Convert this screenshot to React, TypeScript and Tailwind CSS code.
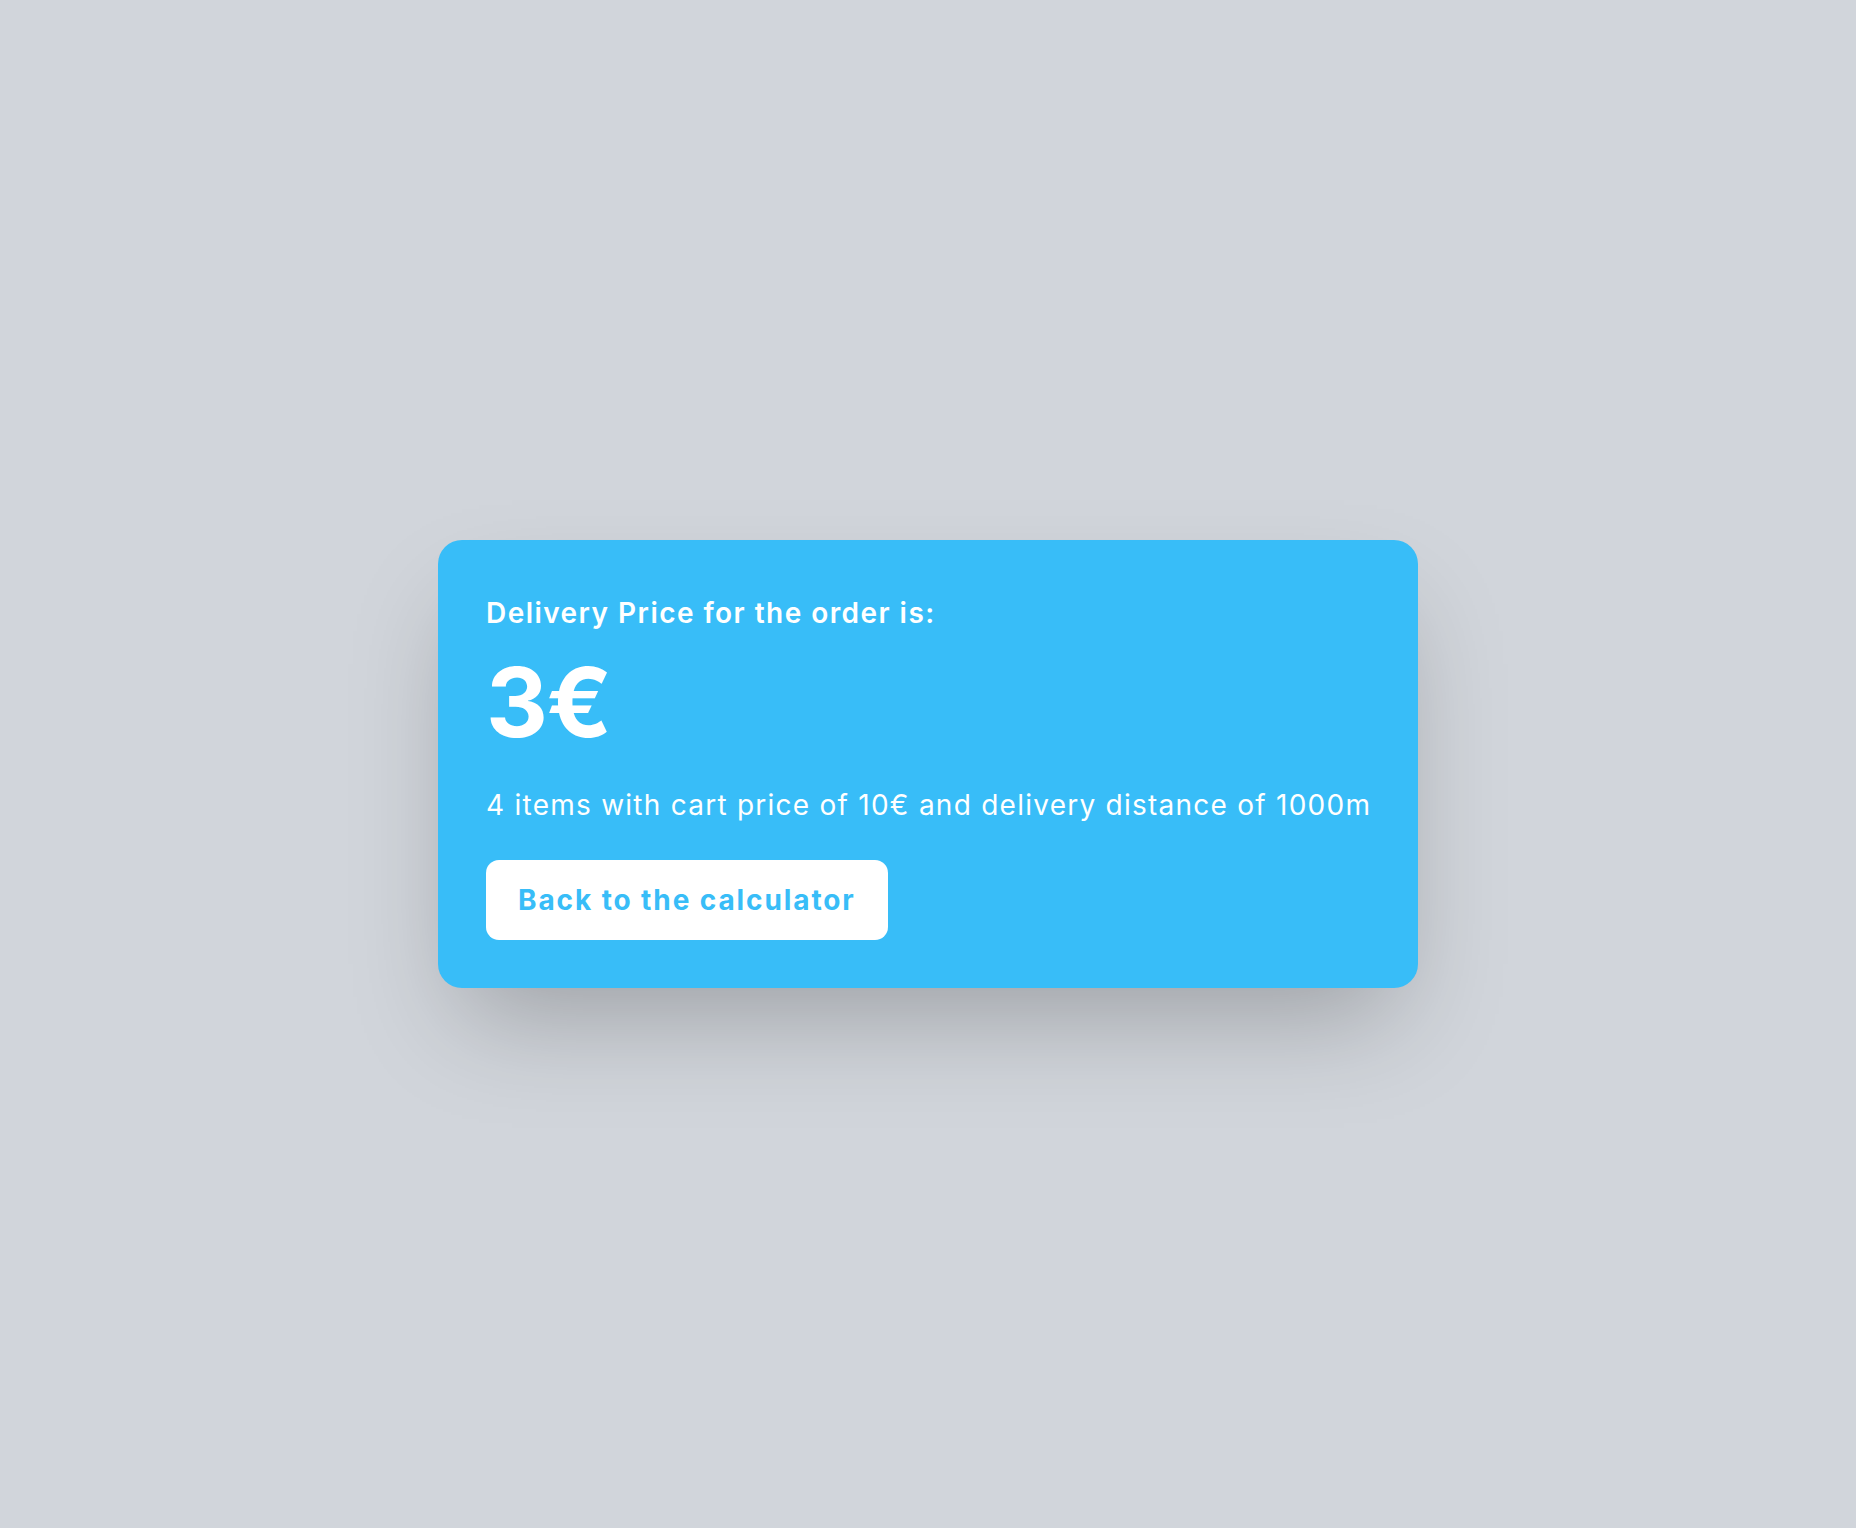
export default function App() {
  return (
    <div className="min-h-screen w-full bg-[#d1d5db] flex items-center justify-center font-['Inter',sans-serif]">
      <div className="w-[980px] h-[448px] rounded-[24px] bg-[#38bdf8] pt-[53px] pb-12 px-12 text-white shadow-[0_50px_100px_-24px_rgba(0,0,0,0.25)] flex flex-col items-start">
        <h2 className="text-[28px] leading-[40px] font-semibold tracking-[1.45px]">Delivery Price for the order is:</h2>
        <p className="mt-[21px] text-[96px] leading-none font-bold tracking-[-1.5px]">3€</p>
        <p className="mt-[35px] text-[28px] leading-[40px] font-normal tracking-[1.25px] whitespace-nowrap">
          4 items with cart price of 10€ and delivery distance of 1000m
        </p>
        <button className="mt-[35px] h-[80px] px-8 rounded-[13px] bg-white text-[#38bdf8] text-[28px] font-bold tracking-[1.9px]">
          Back to the calculator
        </button>
      </div>
    </div>
  );
}
